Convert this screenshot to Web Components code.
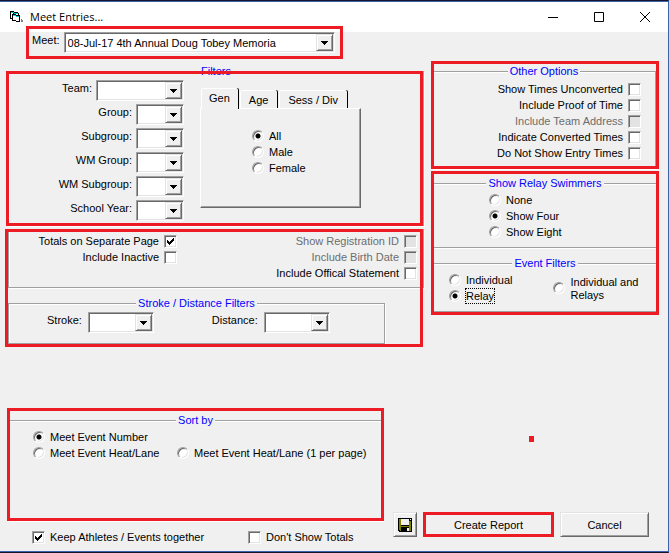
<!DOCTYPE html>
<html lang="en">
<head>
<meta charset="utf-8">
<meta name="viewport" content="width=device-width, initial-scale=1">
<title>Meet Entries...</title>
<style>
  body {
    margin: 0;
    background: #f0f0f0;
    color: #000;
    font: 11px/14px "Liberation Sans", Arial, sans-serif;
  }
</style>
</head>
<body>
<meet-entries></meet-entries>

<script>
class TitleBar extends HTMLElement {
  constructor(){
    super();
    this.attachShadow({mode: 'open'});
  }

  static get styles(){
    return /* css */`
      :host {
        display: flex;
        align-items: center;
        height: 30px;
        border-top: 1px solid #3f62ad;
        background: #fff;
        padding-left: 8px;
        font: 11px/16px "Open Sans", "Noto Sans", sans-serif;
      }

      h1 {
        flex: 1;
        margin: 0 0 0 6px;
        font: inherit;
      }

      button {
        display: grid;
        place-items: center;
        width: 46px;
        height: 30px;
        padding: 0;
        border: 0;
        background: none;
      }

      button:hover {
        background: #e5e5e5;
      }

      svg {
        display: block;
      }
    `
  }

  connectedCallback(){
    this.shadowRoot.innerHTML = /* html */`
      <style>${TitleBar.styles}</style>
      <svg width="16" height="14" viewBox="0 0 16 14" shape-rendering="crispEdges" aria-hidden="true">
        <path d="M2 1h4v1h4v1h1v2H5v4H2z"/>
        <path d="M3 3h2v1h5v1H5v3H3z" fill="#fff"/>
        <path d="M3 2h3v1h4v1H6V3H3z" fill="#00d8d8"/>
        <path d="M4 4h4v1h4v7H8v-1H4z"/>
        <path d="M5 6h3v1h3v4H8v-1H5z" fill="#fff"/>
        <path d="M5 5h3v1h3v1H8V6H5z" fill="#00d8d8"/>
        <path d="M13 9h1v1h1v2h-2z" fill="#808080"/>
      </svg>
      <h1><slot></slot></h1>
      <button type="button" aria-label="Minimize">
        <svg width="10" height="10"><path d="M0 5.5h10" stroke="#000"/></svg>
      </button>
      <button type="button" aria-label="Maximize">
        <svg width="10" height="10"><path d="M.5 .5h9v9h-9z" fill="none" stroke="#000"/></svg>
      </button>
      <button type="button" aria-label="Close">
        <svg width="10" height="10"><path d="M0 0l10 10M10 0L0 10" stroke="#000"/></svg>
      </button>
    `;
  }
}

/* Red rectangle drawn over whatever is slotted in. */
class MarkedArea extends HTMLElement {
  constructor(){
    super();
    this.attachShadow({mode: 'open'});
  }

  static get styles(){
    return /* css */`
      :host {
        display: block;
        position: relative;
      }

      :host::after {
        content: "";
        position: absolute;
        inset: var(--mark-inset, 0);
        border: 3px solid #ed1c24;
        pointer-events: none;
      }
    `
  }

  connectedCallback(){
    this.shadowRoot.innerHTML = /* html */`
      <style>${MarkedArea.styles}</style>
      <slot></slot>
    `;
  }
}

class GroupFrame extends HTMLElement {
  constructor(){
    super();
    this.attachShadow({mode: 'open'});
  }

  static get styles(){
    return /* css */`
      :host {
        display: block;
      }

      fieldset {
        box-sizing: border-box;
        height: 100%;
        min-width: 0;
        margin: 0;
        padding: 0;
        border: 1px solid #a0a0a0;
        box-shadow: inset 1px 1px #fff, 1px 1px #fff;
      }

      legend {
        height: 14px;
        margin: 0 auto;
        padding: 0 2px;
        background: #f0f0f0;
        color: #00f;
      }

      :host([joined="below"]) fieldset {
        border-bottom: 0;
      }

      :host([joined="above"]) fieldset {
        border-top: 0;
        box-shadow: inset 1px 0 #fff, 1px 1px #fff;
      }
    `
  }

  connectedCallback(){
    const caption = this.getAttribute('caption');

    this.shadowRoot.innerHTML = /* html */`
      <style>${GroupFrame.styles}</style>
      <fieldset>
        ${caption ? `<legend>${caption}</legend>` : ''}
        <slot></slot>
      </fieldset>
    `;
  }
}

class ComboField extends HTMLElement {
  constructor(){
    super();
    this.attachShadow({mode: 'open'});
  }

  static get styles(){
    return /* css */`
      :host {
        display: flex;
        justify-content: flex-end;
        gap: 4px;
      }

      label {
        margin-top: 1px;
        white-space: nowrap;
      }

      .box {
        box-sizing: border-box;
        display: grid;
        width: var(--combo-width, 48px);
        height: 21px;
        border: 1px solid;
        border-color: #a0a0a0 #fff #fff #a0a0a0;
        background: #fff;
        box-shadow: inset 1px 1px #696969, inset -1px -1px #e3e3e3;
      }

      select, .arrow {
        grid-area: 1 / 1;
      }

      select {
        appearance: none;
        width: 100%;
        padding: 0 18px 0 3px;
        border: 0;
        border-radius: 0;
        background: none;
        color: inherit;
        font: inherit;
        outline: 0;
      }

      .arrow {
        box-sizing: border-box;
        display: grid;
        place-items: center;
        justify-self: end;
        width: 17px;
        margin: 1px;
        border: 1px solid;
        border-color: #e3e3e3 #696969 #696969 #e3e3e3;
        background: #f0f0f0;
        box-shadow: inset 1px 1px #fff, inset -1px -1px #a0a0a0;
        pointer-events: none;
      }
    `
  }

  connectedCallback(){
    this.shadowRoot.innerHTML = /* html */`
      <style>${ComboField.styles}</style>
      <label for="combo">${this.getAttribute('label')}</label>
      <span class="box">
        <select id="combo"><option>${this.getAttribute('value') || ''}</option></select>
        <span class="arrow">
          <svg width="7" height="4" shape-rendering="crispEdges"><path d="M0 0h7v1H6v1H5v1H4v1H3V3H2V2H1V1H0z"/></svg>
        </span>
      </span>
    `;
  }
}

class CheckOption extends HTMLElement {
  constructor(){
    super();
    this.attachShadow({mode: 'open'});
  }

  static get styles(){
    return /* css */`
      :host {
        display: flex;
      }

      label {
        display: flex;
        align-items: center;
        gap: 5px;
        height: 16px;
        white-space: nowrap;
      }

      :host([trailing]) {
        justify-content: flex-end;
      }

      :host([trailing]) label {
        flex-direction: row-reverse;
      }

      :host([disabled]) {
        color: #6d6d6d;
      }

      .box {
        display: grid;
      }

      input, svg {
        grid-area: 1 / 1;
      }

      input {
        appearance: none;
        box-sizing: border-box;
        width: 13px;
        height: 13px;
        margin: 0;
        border: 1px solid;
        border-color: #a0a0a0 #fff #fff #a0a0a0;
        background: #fff;
        box-shadow: inset 1px 1px #696969, inset -1px -1px #e3e3e3;
      }

      input:disabled {
        background: #e3e3e3;
      }

      svg {
        visibility: hidden;
        pointer-events: none;
      }

      input:checked + svg {
        visibility: visible;
      }
    `
  }

  connectedCallback(){
    this.shadowRoot.innerHTML = /* html */`
      <style>${CheckOption.styles}</style>
      <label>
        <span class="box">
          <input type="checkbox">
          <svg width="13" height="13" shape-rendering="crispEdges"><path d="M3 5h1v1h1v1h1V6h1V5h1V4h1V3h1v3H9v1H8v1H7v1H6v1H5V9H4V8H3z"/></svg>
        </span>
        <span><slot></slot></span>
      </label>
    `;

    const input = this.shadowRoot.querySelector('input');
    input.checked = this.hasAttribute('checked');
    input.disabled = this.hasAttribute('disabled');
  }
}

class RadioOption extends HTMLElement {
  constructor(){
    super();
    this.attachShadow({mode: 'open'});
  }

  static get styles(){
    return /* css */`
      :host {
        display: flex;
      }

      label {
        display: flex;
        align-items: center;
        gap: 4px;
        min-height: 16px;
      }

      input {
        appearance: none;
        flex: none;
        box-sizing: border-box;
        width: 12px;
        height: 12px;
        margin: 0;
        border: 1px solid;
        border-color: #a0a0a0 #fff #fff #a0a0a0;
        border-radius: 50%;
        background: #fff;
        box-shadow: inset 1px 1px #696969, inset -1px -1px #e3e3e3;
        outline: 0;
      }

      input:checked {
        background: radial-gradient(circle, #000 2px, #fff 3px);
      }

      .text {
        border: 1px solid transparent;
        padding-top: 1px;
        line-height: 13px;
      }

      :host([current]) .text {
        border: 1px dotted #000;
      }
    `
  }

  get input(){
    return this.shadowRoot.querySelector('input');
  }

  connectedCallback(){
    this.shadowRoot.innerHTML = /* html */`
      <style>${RadioOption.styles}</style>
      <label>
        <input type="radio">
        <span class="text"><slot></slot></span>
      </label>
    `;

    this.input.checked = this.hasAttribute('checked');
    this.input.addEventListener('change', () => {
      this.dispatchEvent(new CustomEvent('pick', {bubbles: true}));
    });
  }
}

/* Keeps one radio-option picked; native grouping stops at the shadow roots. */
class RadioSet extends HTMLElement {
  constructor(){
    super();
    this.attachShadow({mode: 'open'});
  }

  connectedCallback(){
    this.shadowRoot.innerHTML = /* html */`
      <style>
        :host {
          display: block;
        }
      </style>
      <slot></slot>
    `;

    this.addEventListener('pick', (event) => {
      this.querySelectorAll('radio-option').forEach((option) => {
        option.input.checked = option === event.target;
      });
    });
  }
}

class TabPanel extends HTMLElement {
  constructor(){
    super();
    this.attachShadow({mode: 'open'});
  }

  static get styles(){
    return /* css */`
      :host {
        display: block;
      }

      .tabs {
        display: flex;
        align-items: flex-end;
        height: 20px;
        padding-left: 1px;
      }

      button {
        height: 18px;
        margin: 0 2px 0 0;
        padding: 0 9px;
        border: 0;
        border-top: 1px solid #fff;
        border-radius: 2px 2px 0 0;
        background: #f0f0f0;
        box-shadow: inset 1px 0 #fff, 1px 0 #000;
        color: inherit;
        font: inherit;
      }

      button[aria-selected="true"] {
        position: relative;
        height: 21px;
        margin-bottom: -1px;
        padding: 0 8px 2px;
      }

      .page {
        box-sizing: border-box;
        min-height: 100px;
        padding: 19px 0 0 51px;
        border: 1px solid;
        border-color: #fff #696969 #696969 #fff;
        box-shadow: inset -1px -1px #a0a0a0;
      }
    `
  }

  connectedCallback(){
    const tabs = this.getAttribute('tabs').split(',');

    this.shadowRoot.innerHTML = /* html */`
      <style>${TabPanel.styles}</style>
      <div class="tabs" role="tablist">
        ${tabs.map((tab, i) => `<button type="button" role="tab" aria-selected="${i === 0}">${tab}</button>`).join('')}
      </div>
      <div class="page" role="tabpanel"><slot></slot></div>
    `;
  }
}

class PushButton extends HTMLElement {
  constructor(){
    super();
    this.attachShadow({mode: 'open'});
  }

  static get styles(){
    return /* css */`
      :host {
        display: block;
      }

      button {
        display: grid;
        place-items: center;
        width: 100%;
        height: 25px;
        padding: 0;
        border: 1px solid;
        border-color: #e3e3e3 #696969 #696969 #e3e3e3;
        background: #f0f0f0;
        box-shadow: inset 1px 1px #fff, inset -1px -1px #a0a0a0;
        color: inherit;
        font: inherit;
      }

      button:active {
        border-color: #696969 #e3e3e3 #e3e3e3 #696969;
        box-shadow: none;
      }
    `
  }

  connectedCallback(){
    this.shadowRoot.innerHTML = /* html */`
      <style>${PushButton.styles}</style>
      <button type="button"><slot></slot></button>
    `;

    if (this.hasAttribute('hint')) {
      this.shadowRoot.querySelector('button').setAttribute('aria-label', this.getAttribute('hint'));
    }
  }
}

class MeetEntries extends HTMLElement {
  constructor(){
    super();
    this.attachShadow({mode: 'open'});
  }

  static get styles(){
    return /* css */`
      :host {
        box-sizing: border-box;
        display: flex;
        flex-direction: column;
        min-height: 100vh;
        border: 1px solid #14142a;
        border-left: 0;
        border-right-color: #3f62ad;
        padding-bottom: 1px;
        box-shadow: inset 0 -1px #3f62ad;
      }

      .meet {
        align-self: flex-start;
        margin: -6px 0 0 26px;
        padding: 6px 8px 6px 6px;
        --combo-width: 271px;
      }

      .columns {
        display: grid;
        grid-template-columns: 419fr 228fr;
        align-items: start;
        gap: 7px;
        margin: 2px 9px 0 5px;
      }

      .left {
        display: grid;
        gap: 3px;
        padding-top: 10px;
      }

      .left > marked-area {
        --mark-inset: 0 1px 0 0;
        padding-left: 3px;
      }

      .left > marked-area:first-child {
        --mark-inset: 0 1px;
      }

      .filters {
        display: flex;
        gap: 16px;
        padding: 2px 0 5px;
      }

      .lists {
        display: grid;
        gap: 3px;
        width: 175px;
      }

      .filters tab-panel {
        width: 161px;
        margin-top: 8px;
      }

      .upper {
        margin-top: -7px;
      }

      .totals {
        display: flex;
        justify-content: space-between;
        padding: 4px 6px 6px 0;
      }

      .totals > div:first-child {
        width: 168px;
      }

      .strokes {
        margin: 8px 39px 0 0;
        padding-bottom: 3px;
      }

      .pair {
        display: flex;
        gap: 58px;
        padding: 2px 0 10px 38px;
      }

      .pair combo-field {
        gap: 6px;
        --combo-width: 66px;
      }

      .right {
        display: grid;
        gap: 2px;
      }

      .other {
        padding: 3px 3px 0 1px;
      }

      .other div {
        padding: 3px 14px 7px 0;
      }

      .relay {
        display: grid;
        gap: 8px;
        padding: 5px 1px 3px;
      }

      .swimmers {
        padding: 2px 0 7px 56px;
      }

      .events {
        display: flex;
        align-items: center;
        gap: 40px;
        padding: 2px 0 7px 16px;
      }

      .both {
        width: 90px;
      }

      .bottom {
        display: flex;
        justify-content: space-between;
        margin: auto 19px 0 7px;
        padding-top: 10px;
      }

      .options {
        flex: 0 1 377px;
      }

      .sort {
        padding: 5px 1px 0;
      }

      .order {
        display: grid;
        grid-template-columns: 144px 1fr;
        padding: 2px 0 59px 24px;
      }

      .order :first-child {
        grid-column: 1 / -1;
      }

      .keep {
        display: grid;
        grid-template-columns: 216px 1fr;
        padding: 8px 0 6px 25px;
      }

      .actions {
        display: flex;
        flex-direction: column;
        justify-content: space-between;
        width: 256px;
        padding: 28px 0 14px;
      }

      .dot {
        width: 5px;
        height: 6px;
        margin-left: 136px;
        background: #ed1c24;
      }

      .buttons {
        display: grid;
        grid-template-columns: 24px 131fr 89fr;
        column-gap: 6px;
      }
    `
  }

  connectedCallback(){
    this.shadowRoot.innerHTML = /* html */`
      <style>${MeetEntries.styles}</style>
      <title-bar>Meet Entries...</title-bar>

      <marked-area class="meet">
        <combo-field label="Meet:" value="08-Jul-17 4th Annual Doug Tobey Memoria"></combo-field>
      </marked-area>

      <div class="columns">
        <div class="left">
          <marked-area>
            <group-frame class="upper" caption="Filters" joined="below">
              <div class="filters">
                <div class="lists">
                  <combo-field label="Team:" style="--combo-width: 88px"></combo-field>
                  <combo-field label="Group:"></combo-field>
                  <combo-field label="Subgroup:"></combo-field>
                  <combo-field label="WM Group:"></combo-field>
                  <combo-field label="WM Subgroup:"></combo-field>
                  <combo-field label="School Year:"></combo-field>
                </div>
                <tab-panel tabs="Gen,Age,Sess / Div">
                  <radio-set>
                    <radio-option checked>All</radio-option>
                    <radio-option>Male</radio-option>
                    <radio-option>Female</radio-option>
                  </radio-set>
                </tab-panel>
              </div>
            </group-frame>
          </marked-area>

          <marked-area>
            <group-frame joined="above">
              <div class="totals">
                <div>
                  <check-option trailing checked>Totals on Separate Page</check-option>
                  <check-option trailing>Include Inactive</check-option>
                </div>
                <div>
                  <check-option trailing disabled>Show Registration ID</check-option>
                  <check-option trailing disabled>Include Birth Date</check-option>
                  <check-option trailing>Include Offical Statement</check-option>
                </div>
              </div>
            </group-frame>
            <group-frame class="strokes" caption="Stroke / Distance Filters">
              <div class="pair">
                <combo-field label="Stroke:"></combo-field>
                <combo-field label="Distance:"></combo-field>
              </div>
            </group-frame>
          </marked-area>
        </div>

        <div class="right">
          <marked-area class="other">
            <group-frame caption="Other Options">
              <div>
                <check-option trailing>Show Times Unconverted</check-option>
                <check-option trailing>Include Proof of Time</check-option>
                <check-option trailing disabled>Include Team Address</check-option>
                <check-option trailing>Indicate Converted Times</check-option>
                <check-option trailing>Do Not Show Entry Times</check-option>
              </div>
            </group-frame>
          </marked-area>

          <marked-area class="relay">
            <group-frame caption="Show Relay Swimmers">
              <radio-set class="swimmers">
                <radio-option>None</radio-option>
                <radio-option checked>Show Four</radio-option>
                <radio-option>Show Eight</radio-option>
              </radio-set>
            </group-frame>
            <group-frame caption="Event Filters">
              <radio-set class="events">
                <div>
                  <radio-option>Individual</radio-option>
                  <radio-option checked current>Relay</radio-option>
                </div>
                <radio-option class="both">Individual and Relays</radio-option>
              </radio-set>
            </group-frame>
          </marked-area>
        </div>
      </div>

      <div class="bottom">
        <div class="options">
          <marked-area class="sort">
            <group-frame caption="Sort by">
              <radio-set class="order">
                <radio-option checked>Meet Event Number</radio-option>
                <radio-option>Meet Event Heat/Lane</radio-option>
                <radio-option>Meet Event Heat/Lane (1 per page)</radio-option>
              </radio-set>
            </group-frame>
          </marked-area>
          <div class="keep">
            <check-option checked>Keep Athletes / Events together</check-option>
            <check-option>Don't Show Totals</check-option>
          </div>
        </div>
        <div class="actions">
          <div class="dot"></div>
          <div class="buttons">
            <push-button hint="Save">
              <svg width="14" height="14" viewBox="0 0 14 14" shape-rendering="crispEdges" aria-hidden="true">
                <path d="M0 0h14v14H1v-1H0z"/>
                <path d="M1 1h2v7h8V3h2v10h-2V9H3v4H2v-1H1z" fill="#808000"/>
                <path d="M3 1h8v6H3zM12 1h1v1h-1zM9 10h2v3H9z" fill="#f0f0f0"/>
              </svg>
            </push-button>
            <marked-area>
              <push-button>Create Report</push-button>
            </marked-area>
            <push-button>Cancel</push-button>
          </div>
        </div>
      </div>
    `;
  }
}

customElements.define('title-bar', TitleBar);
customElements.define('marked-area', MarkedArea);
customElements.define('group-frame', GroupFrame);
customElements.define('combo-field', ComboField);
customElements.define('check-option', CheckOption);
customElements.define('radio-option', RadioOption);
customElements.define('radio-set', RadioSet);
customElements.define('tab-panel', TabPanel);
customElements.define('push-button', PushButton);
customElements.define('meet-entries', MeetEntries);
</script>
</body>
</html>
